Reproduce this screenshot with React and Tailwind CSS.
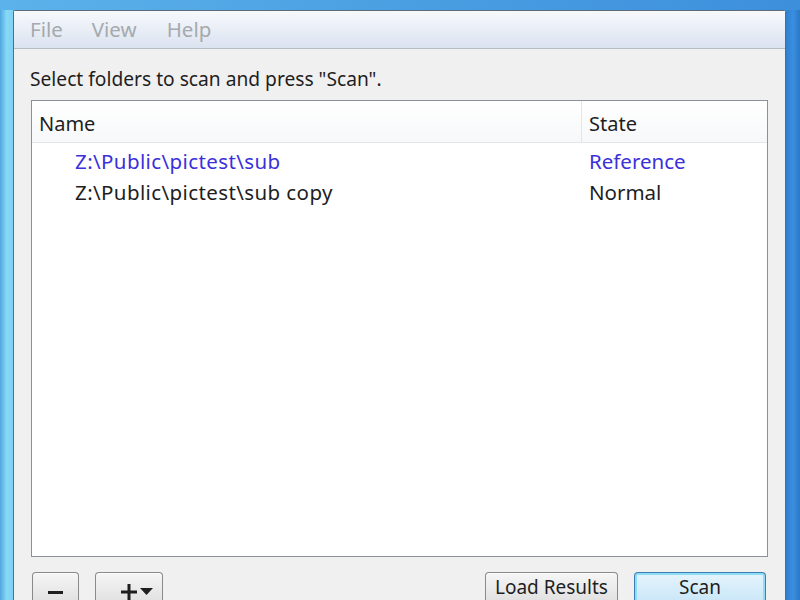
import React from 'react';

const font = { fontFamily: '"Noto Sans", "Open Sans", sans-serif' };

const rows = [
    { path: 'Z:\\Public\\pictest\\sub', state: 'Reference', blue: true },
    { path: 'Z:\\Public\\pictest\\sub copy', state: 'Normal', blue: false },
];

// Buttons run off the bottom edge in the screenshot, so only their top part is drawn
const Button = ({ children, className = '', primary = false }) => (
    <button
        className={
            'h-[28px] rounded-t-[4px] border border-b-0 flex justify-center items-start text-[19px] leading-none text-[#1e1e1e] ' +
            (primary
                ? 'border-[#3c7fb1] bg-gradient-to-b from-[#e5f4fc] to-[#cbe8f8] shadow-[inset_0_2px_0_0_#8fdcf7,inset_2px_0_0_0_#8fdcf7,inset_-2px_0_0_0_#8fdcf7] '
                : 'border-[#8a8a8a] bg-gradient-to-b from-[#f6f6f6] to-[#e2e2e2] shadow-[inset_0_1px_0_0_#fbfbfb] ') +
            className
        }
    >
        {children}
    </button>
);

export default function App() {
    return (
        <div className="w-[800px] h-[600px] overflow-hidden flex flex-col bg-[#4a9ee0]" style={font}>
            {/* title strip */}
            <div className="h-[10px] shrink-0 bg-gradient-to-r from-[#5cb2ea] via-[#4a9fe2] to-[#3d8fdc]" />
            <div className="flex flex-1 min-h-0">
                {/* left frame */}
                <div className="w-[13px] shrink-0 bg-gradient-to-r from-[#4fa6de] via-[#86d8f6] to-[#7fd2f3]" />

                {/* window */}
                <div className="flex-1 flex flex-col bg-[#f0f0f0] border-l border-t border-r border-[#5b6b7c] rounded-t-[3px]">
                    {/* menu bar */}
                    <div className="h-[38px] shrink-0 flex items-center pl-[16px] bg-gradient-to-b from-[#f7f9fc] via-[#e9eef6] to-[#dbe3f0] border-b border-[#b6bcc6]">
                        <span className="text-[20.5px] text-[#a6a9ad]">File</span>
                        <span className="text-[20.5px] text-[#a6a9ad] ml-[29px]">View</span>
                        <span className="text-[20.5px] text-[#a6a9ad] ml-[30px]">Help</span>
                    </div>

                    <div className="flex-1 flex flex-col px-[17px] pt-[18px]">
                        <div className="text-[19.2px] leading-[24px] text-[#1e1e1e] ml-[-1px]">
                            Select folders to scan and press "Scan".
                        </div>

                        {/* list view */}
                        <div className="mt-[9px] h-[457px] border border-[#8c9098] bg-white flex flex-col">
                            <div className="h-[42px] flex border-b border-[#e3e5e8] bg-gradient-to-b from-white to-[#f7f8fa] text-[20px] text-[#1e1e1e]">
                                <div className="w-[550px] pl-[7px] pt-[4px] flex items-center border-r border-[#e3e5e8]">Name</div>
                                <div className="flex-1 pl-[7px] pt-[4px] flex items-center">State</div>
                            </div>
                            <div className="pt-[3px]">
                                {rows.map((r) => (
                                    <div
                                        key={r.path}
                                        className={'h-[31px] flex items-center text-[20.5px] ' + (r.blue ? 'text-[#3b30da]' : 'text-[#1e1e1e]')}
                                    >
                                        <div className="w-[557px] pl-[43px] tracking-[0.4px]">{r.path}</div>
                                        <div>{r.state}</div>
                                    </div>
                                ))}
                            </div>
                        </div>

                        {/* buttons */}
                        <div className="mt-[15px] mr-[2px] flex items-start">
                            <Button className="w-[47px] ml-[1px] pt-[18px]" aria-label="Remove">
                                <svg width="15" height="3" viewBox="0 0 15 3">
                                    <rect width="15" height="3" fill="#1e1e1e" />
                                </svg>
                            </Button>
                            <Button className="w-[68px] ml-[16px] pt-[11px] pl-[16px] gap-[3px]">
                                <svg width="16" height="16" viewBox="0 0 16 16">
                                    <rect x="6.5" y="0" width="3" height="16" fill="#1e1e1e" />
                                    <rect x="0" y="6.5" width="16" height="3" fill="#1e1e1e" />
                                </svg>
                                <svg width="13" height="7" viewBox="0 0 13 7" className="mt-[4px]">
                                    <path d="M0 0 H13 L6.5 7 Z" fill="#1e1e1e" />
                                </svg>
                            </Button>
                            <div className="flex-1" />
                            <Button className="w-[133px] pt-[5px]">Load Results</Button>
                            <Button primary className="w-[132px] ml-[16px] pt-[5px]">Scan</Button>
                        </div>
                    </div>
                </div>

                {/* right frame */}
                <div className="w-[14px] shrink-0 bg-gradient-to-r from-[#2f7fd0] via-[#3b8fe0] to-[#2a78c8]" />
            </div>
        </div>
    );
}
